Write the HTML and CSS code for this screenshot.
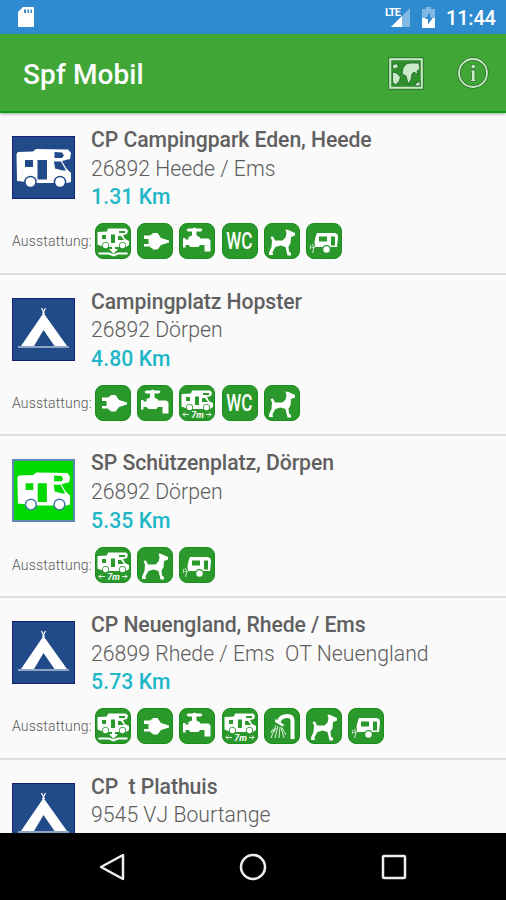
FILE: index.html
```html
<!DOCTYPE html>
<html lang="de">
<head>
<meta charset="utf-8">
<title>Spf Mobil</title>
<link rel="stylesheet" href="styles.css">
</head>
<body>
<svg class="defs" aria-hidden="true">
  <symbol id="van" viewBox="1 1 61 61">
    <path class="white" d="M4.500 18 L6 16 21 15.500 24 13 56 13.500 59 17 58 23 50 25 54 32 59 37 V46 L55 47 H24 L5 45Z"/>
    <path class="hole" d="M13 24h8v7h-8zM25.500 24h9.500v19.500h-9.500zM42.500 16l7.500 .5 2 3-2 2.500h-7.500zM42 25.500h7l5 9h-3l-8-2z"/>
    <circle class="wheel" cx="18.500" cy="46" r="6.300"/><circle class="wheel" cx="48" cy="46" r="6.300"/>
    <circle class="white" cx="18.500" cy="46" r="4.800"/><circle class="white" cx="48" cy="46" r="4.800"/>
  </symbol>
  <symbol id="tent" viewBox="1 1 61 61">
    <path class="white" d="M31.500 15 L55 48 H42.500 L31.500 32 22 48H9Z"/>
    <path class="white-line" d="M29.500 10 32.500 16M33.500 10 30.500 16M6 49H57"/>
  </symbol>
  <symbol id="mini-van" viewBox="1 1 34 34">
    <path class="white" d="M2.500 9 L12 8.500 13 5.500 H31 L33 7.500 32 11 28 12 30 16 34 18V22L31 24H9L2.500 21.500Z"/>
    <path class="hole" d="M7 12h4v4H7zM16 11.500h4v8.500h-4zM24 8h6v2h-6zM23 13h3l3 4h-6z"/>
    <circle class="hole" cx="10.500" cy="22.500" r="3.500"/><circle class="hole" cx="27.500" cy="22.500" r="3.500"/>
    <circle class="white" cx="10.500" cy="22.500" r="2.700"/><circle class="white" cx="27.500" cy="22.500" r="2.700"/>
  </symbol>
  <symbol id="dump" viewBox="1 1 34 34">
    <use href="#mini-van" x="1" y="1" width="34" height="34"/>
    <path class="white" d="M17 22h3v4h3l-4.500 5-4.500-5h3z"/>
    <path class="white-line bold" d="M3.500 30.500H14L18.500 32.500 23 30.500H32.500"/>
  </symbol>
  <symbol id="plug" viewBox="1 1 34 34">
    <path class="white" d="M7 12.500h6.500v-1h2v-1.500h5l3.500 5 8 2.500v2l-8 2.500-3.500 4.500h-5v-1.500h-2v-1.500H7v-2.500h4.500v-5H7z"/>
  </symbol>
  <symbol id="tap" viewBox="1 1 34 34">
    <path class="white" d="M9 5.500h4.500l2-1 2 1H22l1.500 1-1.500 2h-4.500v4l3.500 2v1h8.500l2 2v11h-6V22h-4.500l-1.500 2h-8l-2-2H6.500v2.500H4V15h2.500v1.500h3V14l3.500-1.500v-4H9L7.500 7z"/>
  </symbol>
  <symbol id="dog" viewBox="1 1 34 34">
    <path class="white" d="M6.500 14l2.500-.5 2 4h7.500l3-3 1-4-1-4 3 .5 2 1 4.500 2v2.500l-4 1.500-.5 6.500-2 3 .5 5 2 1.500v2.500h-3.500l-2-8.500-5-1.500-5 1.500-3 5 .5 3H5v-2.500l2.500-5.500.5-6.500z"/>
  </symbol>
  <symbol id="caravan" viewBox="1 1 34 34">
    <path class="white" d="M11 10H29l2.500 1.500.5 3-1 9.500H9l-.5-5 1-5z"/>
    <path class="hole" d="M13 13.500h8v5H13zM25 13.500h4v9h-4z"/>
    <circle class="hole" cx="20.500" cy="26" r="4"/>
    <circle class="white" cx="20.500" cy="26.500" r="3.200"/>
    <path class="white-line faint" d="M9 24.500H5.500M6 21l2 3-1.500 6M4.500 22v4"/>
  </symbol>
  <symbol id="shower" viewBox="1 1 34 34">
    <path class="white-line spout" d="M28.500 31V13q0-5-5-5-7 0-9 6"/>
    <path class="white" d="M11.500 11l9 6-2 1.500L11 14z"/>
    <path class="white-line thin" d="M12 17L7 30M14 18l-3 12M16 19l-1 11M17 19l3 11M12 20l-2 4M18 20l4 7M9 21l-2 4"/>
  </symbol>
  <symbol id="length-arrows" viewBox="1 1 34 34">
    <path class="white-line thin" d="M4 29.500h6M6 27.500l-2 2 2 2M27 29.500h5M30 27.500l2 2-2 2"/>
  </symbol>
</svg>

<div class="screen">
  <header class="status">
    <svg class="sd" viewBox="0 0 16 20"><path fill="#fff" d="M5 0H15q1 0 1 1V19q0 1-1 1H1q-1 0-1-1V5z"/><path fill="#2f8bd0" d="M6 2.500h2V6H6zM9.500 2.500h1.500V6H9.500zM12.500 2.500H14V6h-1.500z"/></svg>
    <div class="status-right">
      <div class="signal"><span class="lte">LTE</span><svg viewBox="0 0 20 20"><path fill="#82b9e4" d="M20 1V20H1z"/><path fill="#fff" d="M12 9V20H1z"/></svg></div>
      <svg class="battery" viewBox="0 0 13 21"><path fill="#82b9e4" d="M4 0h5v2h4v9H0V2h4z"/><path fill="#fff" d="M0 11h13v9q0 1-1 1H1q-1 0-1-1z"/><path fill="#2f8bd0" d="M8 5.500L3 12h3v5.500l5-7H8z"/></svg>
      <span class="time">11:44</span>
    </div>
  </header>
  <div class="toolbar">
    <h1>Spf Mobil</h1>
    <svg class="map" viewBox="0 0 36 33">
      <rect x="1.500" y="1.500" width="33" height="30" fill="#28752a" stroke="#28752a" stroke-width="2.500"/>
      <rect x="2.200" y="2.200" width="31.600" height="28.600" fill="#2f8f2d" stroke="#cbe9c8" stroke-width="2"/>
      <path fill="#cbe9c8" stroke="#24682a" stroke-width=".9" d="M4.500 8l4-1.500 2 3-3 2.500-3-1zM4.500 15l4 1 4 4-1 4-4 4-3-3zM15 11l3-4 4-1 9 0 1 6-3 2 1 4-4-3-2 2-1 6-3 4-2-8-4-2zM27 27l5-3v5h-4z"/>
    </svg>
    <svg class="info" viewBox="0 0 32 32"><circle cx="16" cy="16" r="14" fill="none" stroke="#286f29" stroke-width="3.400"/><circle cx="16" cy="16" r="14" fill="none" stroke="#cbe9c8" stroke-width="1.800"/><path fill="#cbe9c8" stroke="#286f29" stroke-width=".7" d="M14.300 7.500h4v4h-4zM14 13H18v10h1v1.500h-5.500V23H14.500v-8h-.5z"/></svg>
  </div>

  <main class="list">
    <article class="row">
      <div class="top"><svg class="thumb blue"><use href="#van"/></svg>
        <div class="info-text"><h2>CP Campingpark Eden, Heede</h2><p class="place">26892 Heede / Ems</p><p class="km">1.31 Km</p></div></div>
      <div class="features"><span>Ausstattung:</span><div class="tiles"><svg><use href="#dump"/></svg><svg><use href="#plug"/></svg><svg><use href="#tap"/></svg><div class="wc"><span>WC</span></div><svg><use href="#dog"/></svg><svg><use href="#caravan"/></svg></div></div>
    </article>
    <article class="row">
      <div class="top"><svg class="thumb blue"><use href="#tent"/></svg>
        <div class="info-text"><h2>Campingplatz Hopster</h2><p class="place">26892 Dörpen</p><p class="km">4.80 Km</p></div></div>
      <div class="features"><span>Ausstattung:</span><div class="tiles"><svg><use href="#plug"/></svg><svg><use href="#tap"/></svg><svg><use href="#mini-van"/><use href="#length-arrows"/><text class="seven-text" x="17.500" y="31.500">7m</text></svg><div class="wc"><span>WC</span></div><svg><use href="#dog"/></svg></div></div>
    </article>
    <article class="row">
      <div class="top"><svg class="thumb lime"><use href="#van"/></svg>
        <div class="info-text"><h2>SP Schützenplatz, Dörpen</h2><p class="place">26892 Dörpen</p><p class="km">5.35 Km</p></div></div>
      <div class="features"><span>Ausstattung:</span><div class="tiles"><svg><use href="#mini-van"/><use href="#length-arrows"/><text class="seven-text" x="17.500" y="31.500">7m</text></svg><svg><use href="#dog"/></svg><svg><use href="#caravan"/></svg></div></div>
    </article>
    <article class="row">
      <div class="top"><svg class="thumb blue"><use href="#tent"/></svg>
        <div class="info-text"><h2>CP Neuengland, Rhede / Ems</h2><p class="place">26899 Rhede / Ems&nbsp; OT Neuengland</p><p class="km">5.73 Km</p></div></div>
      <div class="features"><span>Ausstattung:</span><div class="tiles"><svg><use href="#dump"/></svg><svg><use href="#plug"/></svg><svg><use href="#tap"/></svg><svg><use href="#mini-van"/><use href="#length-arrows"/><text class="seven-text" x="17.500" y="31.500">7m</text></svg><svg><use href="#shower"/></svg><svg><use href="#dog"/></svg><svg><use href="#caravan"/></svg></div></div>
    </article>
    <article class="row">
      <div class="top"><svg class="thumb blue"><use href="#tent"/></svg>
        <div class="info-text"><h2>CP&nbsp; t Plathuis</h2><p class="place">9545 VJ Bourtange</p></div></div>
    </article>
  </main>

  <nav class="navbar">
    <svg viewBox="0 0 28 28"><path d="M24 2V26L2 14z"/></svg>
    <svg viewBox="0 0 28 28"><circle cx="14" cy="14" r="12"/></svg>
    <svg viewBox="0 0 28 28"><rect x="3" y="3" width="22" height="22" rx="1"/></svg>
  </nav>
</div>
</body>
</html>
```
FILE: styles.css
```css
* { box-sizing: border-box; margin: 0; padding: 0; }
body { width: 506px; height: 900px; overflow: hidden; background: #fafafa; font-family: Roboto, sans-serif; }
svg { display: block; flex: none; }
.defs { position: absolute; width: 0; height: 0; }
.screen { height: 900px; display: flex; flex-direction: column; }
.status { flex: none; height: 34px; background: #2f8bd0; display: flex; justify-content: space-between; padding: 0 11px 0 18px; }
.sd { width: 16px; height: 20px; margin-top: 7px; }
.status-right { display: flex; }
.signal { display: flex; margin: 6px 12px 0 0; }
.signal svg { width: 20px; height: 20px; margin: 1px 0 0 -14px; }
.battery { width: 13px; height: 21px; margin: 7px 11px 0 0; }
.time { color: #fff; font-size: 20px; line-height: 36px; font-weight: 500; width: 49px; white-space: nowrap; letter-spacing: -.2px; }
.lte { width: 14px; margin-right: 5px; font-size: 11px; line-height: 13px; font-weight: 700; color: #fff; letter-spacing: -.9px; }
.toolbar { flex: none; height: 79px; background: #40a737; border-bottom: 2px solid #109c17; display: flex; align-items: center; padding: 0 17px 0 23px; box-shadow: 0 1px 3px rgba(0,0,0,.35); z-index: 1; }
.toolbar h1 { color: #fff; font-size: 28px; font-weight: 500; line-height: 32px; flex: 1; padding-top: 5px; letter-spacing: .1px; }
.map { width: 36px; height: 33px; margin: 1px 33px 0 0; }
.info { width: 32px; height: 32px; margin-top: 1px; }
.list { flex: 1; min-height: 0; overflow: hidden; }
.row { height: 161.700px; border-bottom: 2px solid #dedede; padding: 13px 0 0 12px; }
.top { display: flex; }
.thumb { width: 63px; height: 63px; margin-top: 10px; border: 1px solid; }
.blue { --bg: #214b88; --rim: #214b88; background: #214b88; border-color: #14217a; }
.lime { --bg: #00d900; --rim: #4a75a8; background: #00d900; border: 2px solid #6087b4; }
.info-text { margin-left: 16px; white-space: nowrap; }
.info-text h2, .place, .km { font-size: 21.200px; line-height: 28.600px; }
.info-text h2 { font-weight: 500; color: #606060; letter-spacing: -.07px; }
.place { font-weight: 300; color: #5c5c5c; letter-spacing: .04px; }
.km { font-weight: 500; color: #1fb7c7; letter-spacing: .1px; }
.features { display: flex; align-items: center; height: 36px; margin-top: 11.500px; }
.features > span { width: 83px; flex: none; font-size: 14px; font-weight: 300; color: #585858; white-space: nowrap; letter-spacing: .18px; }
.tiles { display: flex; gap: 6.200px; }
.tiles svg, .wc { --bg: #2b982c; width: 36px; height: 36px; border-radius: 8px; background: #2b982c; border: 1px solid #188f1a; }
.wc { flex: none; display: flex; align-items: center; justify-content: center; color: #fff; }
.wc span { font-size: 24px; font-weight: 500; line-height: 28px; transform: scaleX(.71); }
.white { fill: #fff; }
.hole { fill: var(--bg); }
.wheel { fill: var(--rim); }
.white-line { fill: none; stroke: #fff; stroke-width: 1.200; }
.bold { stroke-width: 2; }
.thin { stroke-width: 1; opacity: .85; }
.faint { opacity: .65; }
.spout { stroke-width: 4; }
.seven-text { font: italic 700 9px Roboto, sans-serif; fill: #fff; text-anchor: middle; }
.navbar { flex: none; height: 67px; background: #000; display: flex; align-items: center; justify-content: center; gap: 112.500px; }
.navbar svg { width: 28px; height: 28px; fill: none; stroke: #eee; stroke-width: 2.500; stroke-linejoin: round; }
```
